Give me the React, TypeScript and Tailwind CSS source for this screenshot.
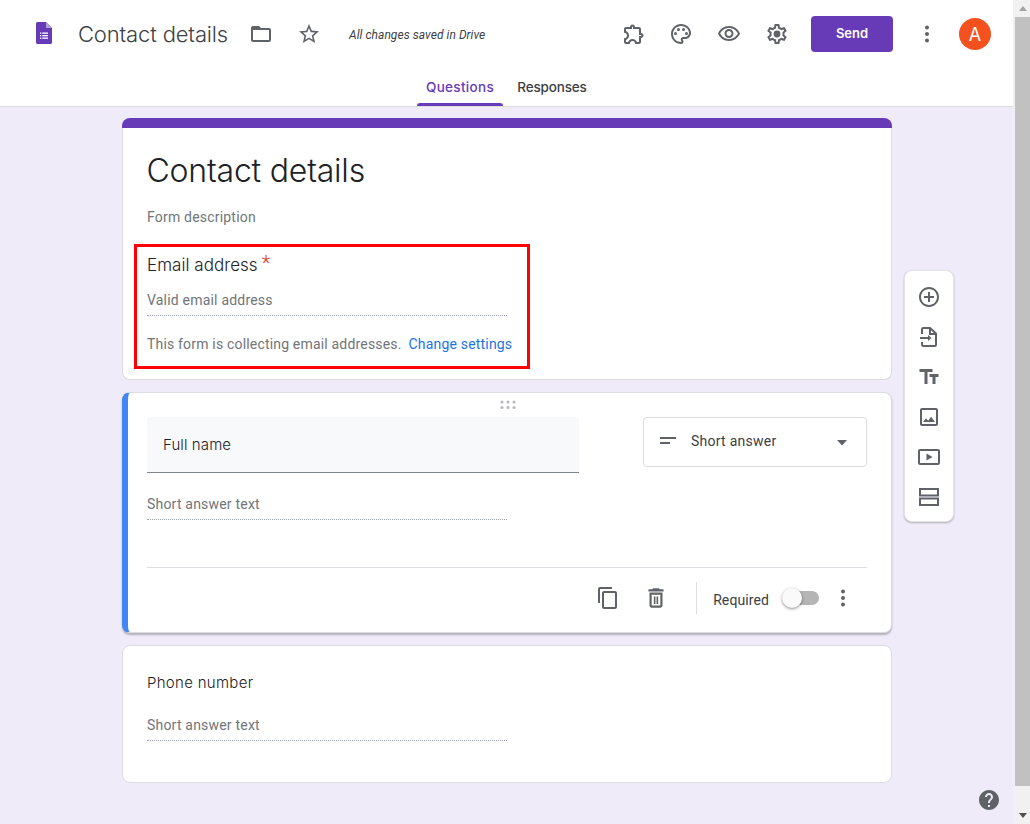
const ICON = "#5f6368";
const HEAD = "font-['Inter','Liberation_Sans',sans-serif]";
const BODY = "font-['Roboto','Liberation_Sans',sans-serif]";

function Icon({ d, size = 24, fill = ICON, children }: { d?: string; size?: number; fill?: string; children?: React.ReactNode }) {
  return (
    <svg width={size} height={size} viewBox="0 0 24 24" fill={fill}>
      {d && <path d={d} />}
      {children}
    </svg>
  );
}

function Dots() {
  return (
    <Icon>
      <circle cx="12" cy="5.5" r="2" />
      <circle cx="12" cy="12" r="2" />
      <circle cx="12" cy="18.5" r="2" />
    </Icon>
  );
}

function HeaderButton({ children }: { children: React.ReactNode }) {
  return <button className="flex h-12 w-12 items-center justify-center">{children}</button>;
}

const PATHS = {
  folder: "M20 6h-8l-2-2H4c-1.1 0-1.99.9-1.99 2L2 18c0 1.1.9 2 2 2h16c1.1 0 2-.9 2-2V8c0-1.1-.9-2-2-2zm0 12H4V8h16v10z",
  star: "M22 9.24l-7.19-.62L12 2 9.19 8.63 2 9.24l5.46 4.73L5.82 21 12 17.27 18.18 21l-1.63-7.03L22 9.24zM12 15.4l-3.76 2.27 1-4.28-3.32-2.88 4.38-.38L12 6.1l1.71 4.04 4.38.38-3.32 2.88 1 4.28L12 15.4z",
  puzzle: "M10.5 4.5c.28 0 .5.22.5.5v2h6v6h2c.28 0 .5.22.5.5s-.22.5-.5.5h-2v6h-2.12c-.68-1.75-2.39-3-4.38-3s-3.7 1.25-4.38 3H4v-2.12c1.75-.68 3-2.39 3-4.38 0-1.99-1.24-3.7-2.99-4.38L4 7h6V5c0-.28.22-.5.5-.5m0-2C9.12 2.5 8 3.62 8 5H4c-1.1 0-1.99.9-1.99 2v3.8h.29c1.49 0 2.7 1.21 2.7 2.7s-1.21 2.7-2.7 2.7H2V20c0 1.1.9 2 2 2h3.8v-.3c0-1.49 1.21-2.7 2.7-2.7s2.7 1.21 2.7 2.7v.3H17c1.1 0 2-.9 2-2v-4c1.38 0 2.5-1.12 2.5-2.5S20.38 11 19 11V7c0-1.1-.9-2-2-2h-4c0-1.38-1.12-2.5-2.5-2.5z",
  palette: "M12 22C6.49 22 2 17.51 2 12S6.49 2 12 2s10 4.04 10 9c0 3.31-2.69 6-6 6h-1.77c-.28 0-.5.22-.5.5 0 .12.05.23.13.33.41.47.64 1.06.64 1.67A2.5 2.5 0 0 1 12 22zm0-18c-4.41 0-8 3.59-8 8s3.59 8 8 8c.28 0 .5-.22.5-.5a.54.54 0 0 0-.14-.35c-.41-.46-.63-1.05-.63-1.65a2.5 2.5 0 0 1 2.5-2.5H16c2.21 0 4-1.79 4-4 0-3.86-3.59-7-8-7z",
  eye: "M12 6c3.79 0 7.17 2.13 8.82 5.5C19.17 14.87 15.79 17 12 17s-7.17-2.13-8.82-5.5C4.83 8.13 8.21 6 12 6m0-2C7 4 2.73 7.11 1 11.5 2.73 15.89 7 19 12 19s9.27-3.11 11-7.5C21.27 7.11 17 4 12 4zm0 5c1.38 0 2.5 1.12 2.5 2.5S13.38 14 12 14s-2.5-1.12-2.5-2.5S10.62 9 12 9m0-2c-2.48 0-4.5 2.02-4.5 4.5S9.52 16 12 16s4.5-2.02 4.5-4.5S14.48 7 12 7z",
  gear: "M19.43 12.98c.04-.32.07-.64.07-.98 0-.34-.03-.66-.07-.98l2.11-1.65c.19-.15.24-.42.12-.64l-2-3.46a.5.5 0 0 0-.61-.22l-2.49 1c-.52-.4-1.08-.73-1.69-.98l-.38-2.65A.488.488 0 0 0 14 2h-4c-.25 0-.46.18-.49.42l-.38 2.65c-.61.25-1.17.59-1.69.98l-2.49-1a.566.566 0 0 0-.18-.03c-.17 0-.34.09-.43.25l-2 3.46c-.13.22-.07.49.12.64l2.11 1.65c-.04.32-.07.65-.07.98 0 .33.03.66.07.98l-2.11 1.65c-.19.15-.24.42-.12.64l2 3.46a.5.5 0 0 0 .61.22l2.49-1c.52.4 1.08.73 1.69.98l.38 2.65c.03.24.24.42.49.42h4c.25 0 .46-.18.49-.42l.38-2.65c.61-.25 1.17-.59 1.69-.98l2.49 1c.06.02.12.03.18.03.17 0 .34-.09.43-.25l2-3.46c.12-.22.07-.49-.12-.64l-2.11-1.65zm-1.98-1.71c.04.31.05.52.05.73 0 .21-.02.43-.05.73l-.14 1.13.89.7 1.08.84-.7 1.21-1.27-.51-1.04-.42-.9.68c-.43.32-.84.56-1.25.73l-1.06.43-.16 1.13-.2 1.35h-1.4l-.19-1.35-.16-1.13-1.06-.43c-.43-.18-.83-.41-1.23-.71l-.91-.7-1.06.43-1.27.51-.7-1.21 1.08-.84.89-.7-.14-1.13c-.03-.31-.05-.54-.05-.74s.02-.43.05-.73l.14-1.13-.89-.7-1.08-.84.7-1.21 1.27.51 1.04.42.9-.68c.43-.32.84-.56 1.25-.73l1.06-.43.16-1.13.2-1.35h1.39l.19 1.35.16 1.13 1.06.43c.43.18.83.41 1.23.71l.91.7 1.06-.43 1.27-.51.7 1.21-1.07.85-.89.7.14 1.13z",
  addCircle: "M13 7h-2v4H7v2h4v4h2v-4h4v-2h-4V7zm-1-5C6.48 2 2 6.48 2 12s4.48 10 10 10 10-4.48 10-10S17.52 2 12 2zm0 18c-4.41 0-8-3.59-8-8s3.59-8 8-8 8 3.59 8 8-3.59 8-8 8z",
  title: "M2.5 4v3h5v12h3V7h5V4h-13zm19 5h-9v3h3v7h3v-7h3V9z",
  image: "M19 5v14H5V5h14m0-2H5c-1.1 0-2 .9-2 2v14c0 1.1.9 2 2 2h14c1.1 0 2-.9 2-2V5c0-1.1-.9-2-2-2zm-4.86 8.86l-3 3.87L9 13.14 6 17h12l-3.86-5.14z",
  copy: "M16 1H4c-1.1 0-2 .9-2 2v14h2V3h12V1zm3 4H8c-1.1 0-2 .9-2 2v14c0 1.1.9 2 2 2h11c1.1 0 2-.9 2-2V7c0-1.1-.9-2-2-2zm0 16H8V7h11v14z",
  trash: "M6 19c0 1.1.9 2 2 2h8c1.1 0 2-.9 2-2V7H6v12zM8 9h8v10H8V9zm7.5-5l-1-1h-5l-1 1H5v2h14V4zM10 10.5h1.5v7H10zM12.5 10.5H14v7h-1.5z",
  help: "M12 2C6.48 2 2 6.48 2 12s4.48 10 10 10 10-4.48 10-10S17.52 2 12 2zm1 17h-2v-2h2v2zm2.07-7.75l-.9.92C13.45 12.9 13 13.5 13 15h-2v-.5c0-1.1.45-2.1 1.17-2.83l1.24-1.26c.37-.36.59-.86.59-1.41 0-1.1-.9-2-2-2s-2 .9-2 2H8c0-2.21 1.79-4 4-4s4 1.79 4 4c0 .88-.36 1.68-.93 2.25z",
};

function Header() {
  return (
    <header className="border-b border-[#dadce0] bg-white">
      <div className="flex h-[68px] items-center pl-[36px] pr-[22px]">
        <svg width="16" height="22" viewBox="0 0 16 22" className="mr-[26px] mb-[2px]">
          <path d="M10 0H1.5C.7 0 0 .7 0 1.5v19C0 21.3.7 22 1.5 22h13c.8 0 1.5-.7 1.5-1.5V6l-6-6z" fill="#673ab7" />
          <path d="M10 0l6 6h-6z" fill="#b39ddb" />
          <g fill="#fff">
            <rect x="4" y="10.5" width="1.3" height="1.3" />
            <rect x="6.2" y="10.5" width="5.8" height="1.3" />
            <rect x="4" y="13" width="1.3" height="1.3" />
            <rect x="6.2" y="13" width="5.8" height="1.3" />
            <rect x="4" y="15.5" width="1.3" height="1.3" />
            <rect x="6.2" y="15.5" width="5.8" height="1.3" />
          </g>
        </svg>
        <div className={`w-[150px] whitespace-nowrap text-[22px] font-[350] leading-7 text-[#3c4043] tracking-[-0.15px] ${HEAD}`}>Contact details</div>
        <div className="ml-[9px] flex">
          <HeaderButton><Icon d={PATHS.folder} /></HeaderButton>
          <HeaderButton><Icon d={PATHS.star} /></HeaderButton>
        </div>
        <div className={`ml-[16px] mt-[2px] text-[12px] italic tracking-[.05px] text-[#3c4043] ${BODY}`}>All changes saved in Drive</div>
        <div className="ml-auto flex items-center">
          <div className="ml-px -mr-px"><HeaderButton><Icon d={PATHS.puzzle} /></HeaderButton></div>
          <HeaderButton><Icon d={PATHS.palette}>
            <circle cx="6.5" cy="11.5" r="1.5" />
            <circle cx="9.5" cy="7.5" r="1.5" />
            <circle cx="14.5" cy="7.5" r="1.5" />
            <circle cx="17.5" cy="11.5" r="1.5" />
          </Icon></HeaderButton>
          <HeaderButton><Icon d={PATHS.eye} /></HeaderButton>
          <HeaderButton><Icon d={PATHS.gear}><circle cx="12" cy="12" r="3.4" /></Icon></HeaderButton>
          <button className={`ml-[10px] h-9 w-[82px] rounded bg-[#673ab7] text-[13px] font-semibold text-white ${HEAD}`}>Send</button>
          <div className="ml-[10px]"><HeaderButton><Dots /></HeaderButton></div>
          <div className={`ml-2 flex h-8 w-8 items-center justify-center rounded-full bg-[#f4511e] text-[18px] text-white ${HEAD}`}>A</div>
        </div>
      </div>
      <nav className={`flex h-[38px] justify-center gap-[5px] text-[13.5px] font-medium ${HEAD}`}>
        <div className="relative flex w-[86px] justify-center pt-[9px] tracking-[.3px] text-[#673ab7]">
          Questions
          <span className="absolute bottom-0 left-0 right-0 h-[3px] rounded-t-[3px] bg-[#673ab7]" />
        </div>
        <div className="flex w-[88px] justify-center pt-[9px] tracking-[-.15px] text-[#3c4043]">Responses</div>
      </nav>
    </header>
  );
}

function AnswerLine({ text }: { text: string }) {
  return (
    <div className="w-[360px] border-b border-dotted border-[#9aa0a6] pb-[5px] text-[14px] leading-5 tracking-[.2px] text-[#70757a]">{text}</div>
  );
}

function FormHeader() {
  return (
    <section className="h-[262px] rounded-lg border border-t-0 border-[#dadce0] bg-white">
      <div className="mx-[-1px] h-[10px] rounded-t-lg bg-[#673ab7]" />
      <div className={`ml-[23.5px] mt-[23px] text-[32px] font-[350] leading-10 text-[#202124] tracking-[-0.2px] ${HEAD}`}>Contact details</div>
      <div className="ml-[24px] mt-[16px] text-[14px] leading-5 tracking-[.2px] text-[#70757a]">Form description</div>
      <div className="ml-[11px] mt-[17px] h-[125px] w-[396px] border-[3px] border-[#ff0000] pl-[10px] pt-[6px]">
        <div className={`flex h-[24px] text-[17px] font-[350] leading-6 text-[#202124] tracking-[.05px] ${HEAD}`}>
          Email address<span className={`ml-1 text-[20px] leading-5 text-[#e0352b] ${BODY}`}>*</span>
        </div>
        <div className="mt-[13px]"><AnswerLine text="Valid email address" /></div>
        <div className="mt-[18px] whitespace-nowrap text-[14px] leading-5 tracking-[.18px] text-[#70757a]">
          This form is collecting email addresses.<a className="ml-[7px] text-[#1a73e8]">Change settings</a>
        </div>
      </div>
    </section>
  );
}

function ActiveQuestion() {
  return (
    <section className="mt-3 h-[241px] rounded-lg border border-l-[6px] border-[#dadce0] border-l-[#4285f4] bg-white pl-[19px] pr-[24px] shadow-[0_2px_2px_rgba(60,64,67,0.35)]">
      <div className="flex h-[24px] items-center justify-center pl-[2px]">
        <svg width="16" height="10" viewBox="0 0 16 10" fill="#b4b6b9">
          <circle cx="2" cy="2" r="1.5" />
          <circle cx="8" cy="2" r="1.5" />
          <circle cx="14" cy="2" r="1.5" />
          <circle cx="2" cy="7.5" r="1.5" />
          <circle cx="8" cy="7.5" r="1.5" />
          <circle cx="14" cy="7.5" r="1.5" />
        </svg>
      </div>
      <div className="flex items-start justify-between">
        <div className={`flex h-[56px] w-[432px] items-center rounded-t border-b border-[#80868b] bg-[#f8f9fa] pl-[16px] pt-[1px] text-[15px] font-[350] tracking-[.1px] text-[#202124] ${HEAD}`}>Full name</div>
        <div className="flex h-[50px] w-[224px] items-center rounded border border-[#dadce0] pl-[12px] pr-[19px] text-[14px] tracking-[.25px] text-[#3c4043]">
          <svg width="24" height="24" viewBox="0 0 24 24" fill={ICON}><rect x="4" y="7" width="16" height="2" /><rect x="4" y="12" width="10" height="2" /></svg>
          <span className="ml-[11px] -mt-[2px]">Short answer</span>
          <svg width="10" height="6" viewBox="0 0 10 6" fill={ICON} className="ml-auto mt-[2px]"><path d="M0 0h10L5 5.5z" /></svg>
        </div>
      </div>
      <div className="mt-[21px]"><AnswerLine text="Short answer text" /></div>
      <div className="mt-[47px] flex h-[61px] items-center justify-end border-t border-[#dadce0] pr-[12px]">
        <Icon d={PATHS.copy} size={24} />
        <div className="ml-[23px]"><Icon d={PATHS.trash} size={26} /></div>
        <div className="ml-[27px] h-[32px] w-px bg-[#dadce0]" />
        <span className="ml-[16px] mt-[4px] text-[14px] tracking-[.1px] text-[#3c4043]">Required</span>
        <div className="relative ml-[15px] h-[14px] w-[35px] rounded-full bg-[#b5b5b5]">
          <span className="absolute left-[-2px] top-[-3px] h-5 w-5 rounded-full bg-[#fafafa] shadow-[0_1px_3px_rgba(0,0,0,0.45)]" />
        </div>
        <div className="ml-[12px]"><Dots /></div>
      </div>
    </section>
  );
}

function PhoneQuestion() {
  return (
    <section className="mt-3 h-[138px] rounded-lg border border-[#dadce0] bg-white pl-[24px] pt-[25px]">
      <div className={`text-[15px] font-[350] leading-6 tracking-[.3px] text-[#202124] ${HEAD}`}>Phone number</div>
      <div className="mt-[20px]"><AnswerLine text="Short answer text" /></div>
    </section>
  );
}

function Toolbar() {
  return (
    <aside className="ml-3 mt-[152px] flex h-[252px] w-[50px] flex-col items-center gap-4 rounded-lg border border-[#e3e3e8] bg-white pt-[14px] shadow-[0_1px_2px_rgba(60,64,67,0.35)]">
      <Icon d={PATHS.addCircle} />
      <svg width="24" height="24" viewBox="0 0 24 24" fill="none" stroke={ICON} strokeWidth="2">
        <path d="M5 9V4.5C5 3.7 5.5 3 6.3 3H13l6 5.5v11.2c0 .7-.6 1.3-1.3 1.3H6.3C5.5 21 5 20.3 5 19.5V17" />
        <path d="M13 3v6h6" />
        <path d="M3 13h9" />
        <path d="M11 10l3.5 3-3.5 3z" fill={ICON} stroke="none" />
      </svg>
      <Icon d={PATHS.title} />
      <Icon d={PATHS.image} />
      <svg width="24" height="24" viewBox="0 0 24 24" fill="none" stroke={ICON} strokeWidth="2">
        <rect x="2" y="5" width="20" height="14" rx="1" />
        <path d="M9.5 8.5v7l6-3.5z" fill={ICON} stroke="none" />
      </svg>
      <svg width="24" height="24" viewBox="0 0 24 24" fill="none" stroke={ICON} strokeWidth="2">
        <rect x="3" y="4" width="18" height="6.5" />
        <rect x="3" y="13.5" width="18" height="6.5" />
      </svg>
    </aside>
  );
}

function Scrollbar() {
  return (
    <div className="flex w-[17px] flex-col bg-[#f1f1f1]">
      <div className="flex h-[17px] items-center justify-center pl-[2px]">
        <svg width="8" height="5" viewBox="0 0 8 5" fill="#a3a3a3"><path d="M4 0l4 5H0z" /></svg>
      </div>
      <div className="ml-[2px] h-[769px] bg-[#c1c1c1]" />
      <div className="mt-auto flex h-[17px] items-center justify-center pl-[2px]">
        <svg width="8" height="5" viewBox="0 0 8 5" fill="#505050"><path d="M0 0h8L4 5z" /></svg>
      </div>
    </div>
  );
}

export default function App() {
  return (
    <div className={`relative flex h-[824px] overflow-hidden bg-[#f0ebf8] ${BODY}`}>
      <div className="w-[1013px] shrink-0">
        <Header />
        <main className="flex items-start pl-[122px] pt-[11px]">
          <div className="w-[770px] shrink-0">
            <FormHeader />
            <ActiveQuestion />
            <PhoneQuestion />
          </div>
          <Toolbar />
        </main>
      </div>
      <Scrollbar />
      <button className="absolute left-[977px] top-[788px]">
        <Icon d={PATHS.help} />
      </button>
    </div>
  );
}
